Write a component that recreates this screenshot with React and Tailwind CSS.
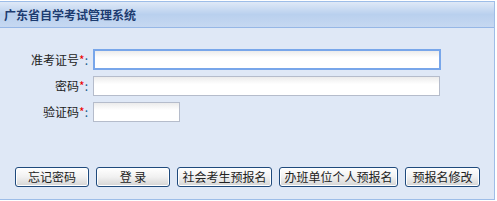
import React from "react";

const font = { fontFamily: '"Noto Sans CJK SC", "Liberation Sans", sans-serif' };

function Btn({ w, children }) {
  return (
    <button
      className={`h-[20px] ${w} rounded-[3px] border border-[#1f4a7c] bg-gradient-to-b from-white via-[#f1f1f1] to-[#d4d4d4] text-[12px] leading-[18px] text-[#222] shadow-[inset_0_0_0_1px_#fff]`}
    >
      {children}
    </button>
  );
}

function Label({ children }) {
  return (
    <div className="w-[89px] shrink-0 pr-[1px] text-right text-[12px] leading-[20px] text-[#222]">
      {children}
      <span className="text-[#e00]">*</span>
      <span className="text-[#1a5a8a]">:</span>
    </div>
  );
}

export default function App() {
  return (
    <div style={font} className="h-[201px] w-[497px] bg-white">
      <div className="mt-[1px] flex h-[199px] w-[495px] flex-col border-r border-t border-b border-[#9dbde8] bg-[#dfe8f6]">
        <div className="flex h-[26px] items-center border-b border-[#96b7e6] bg-gradient-to-b from-[#dfe9f7] via-[#b9d0ee] to-[#c6d8f1] pl-[4px]">
          <span className="text-[12px] font-bold text-[#1d3c70]">广东省自学考试管理系统</span>
        </div>
        <div className="flex flex-col gap-[6px] pt-[21px]">
          <div className="flex items-center gap-[4px]">
            <Label>准考证号</Label>
            <div className="h-[21px] w-[348px] border-2 border-[#78a6ea] bg-gradient-to-b from-[#ececec] to-white to-[40%]" />
          </div>
          <div className="flex items-center gap-[4px]">
            <Label>密码</Label>
            <div className="h-[20px] w-[347px] border border-[#b5bccb] bg-gradient-to-b from-[#ececec] to-white to-[40%]" />
          </div>
          <div className="flex items-center gap-[4px]">
            <Label>验证码</Label>
            <div className="h-[20px] w-[87px] border border-[#b5bccb] bg-gradient-to-b from-[#ececec] to-white to-[40%]" />
          </div>
        </div>
        <div className="mt-[45px] flex gap-[7px] pl-[15px]">
          <Btn w="w-[74px]">忘记密码</Btn>
          <Btn w="w-[74px]">登 录</Btn>
          <Btn w="w-[95px]">社会考生预报名</Btn>
          <Btn w="w-[119px]">办班单位个人预报名</Btn>
          <Btn w="w-[75px]">预报名修改</Btn>
        </div>
      </div>
    </div>
  );
}
